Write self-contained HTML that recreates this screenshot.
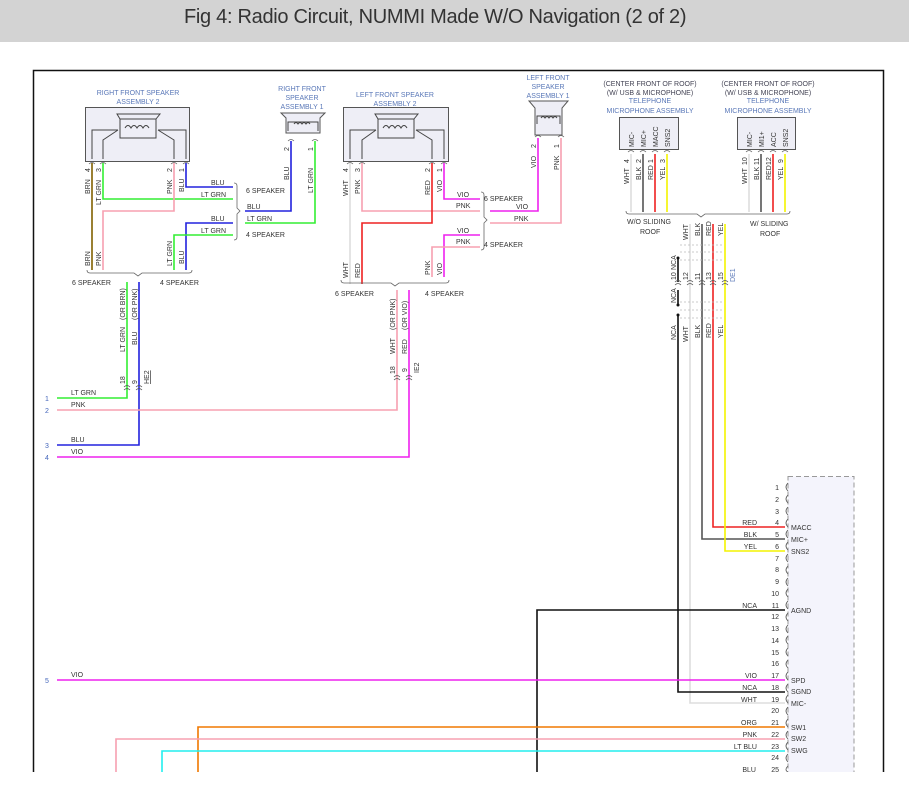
<!DOCTYPE html>
<html><head><meta charset="utf-8"><style>
html,body{margin:0;padding:0;background:#fff;width:909px;height:800px;overflow:hidden}
.hdr{position:absolute;left:0;top:0;width:909px;height:42px;background:#d3d3d3}
.hdr span{position:absolute;left:184px;top:6px;font-family:"Liberation Sans",sans-serif;font-size:20px;color:#333;letter-spacing:-0.3px}
svg{position:absolute;left:0;top:0}
text{font-family:"Liberation Sans",sans-serif;font-size:7px;fill:#333}
.t{fill:#5a78b8;font-size:7px}
.w{fill:none;stroke-width:1.6}
</style></head><body>
<div class="hdr"><span>Fig 4: Radio Circuit, NUMMI Made W/O Navigation (2 of 2)</span></div>
<svg width="909" height="800" viewBox="0 0 909 800">
<path d="M33.5 772 V70.5 H883.5 V772" fill="none" stroke="#111" stroke-width="1.5"/>

<g class="t" text-anchor="middle">
<text x="138" y="95" class="t">RIGHT FRONT SPEAKER</text><text x="138" y="104" class="t">ASSEMBLY 2</text>
<text x="302" y="91" class="t">RIGHT FRONT</text><text x="302" y="100" class="t">SPEAKER</text><text x="302" y="109" class="t">ASSEMBLY 1</text>
<text x="395" y="97" class="t">LEFT FRONT SPEAKER</text><text x="395" y="106" class="t">ASSEMBLY 2</text>
<text x="548" y="80" class="t">LEFT FRONT</text><text x="548" y="89" class="t">SPEAKER</text><text x="548" y="98" class="t">ASSEMBLY 1</text>
<text x="650" y="86" class="t" style="fill:#445">(CENTER FRONT OF ROOF)</text><text x="650" y="95" class="t" style="fill:#445">(W/ USB &amp; MICROPHONE)</text><text x="650" y="103" class="t">TELEPHONE</text><text x="650" y="113" class="t">MICROPHONE ASSEMBLY</text>
<text x="768" y="86" class="t" style="fill:#445">(CENTER FRONT OF ROOF)</text><text x="768" y="95" class="t" style="fill:#445">(W/ USB &amp; MICROPHONE)</text><text x="768" y="103" class="t">TELEPHONE</text><text x="768" y="113" class="t">MICROPHONE ASSEMBLY</text>
</g>

<g fill="#eeeef6" stroke="#555" stroke-width="1">
<rect x="85.5" y="107.5" width="104" height="54"/>
<rect x="343.5" y="107.5" width="105" height="54"/>
<path d="M281 113 H325 L320 118 V133 H286 V118 Z"/>
<path d="M529 101 H568 L562 108 V135 H535 V108 Z"/>
<rect x="619.5" y="117.5" width="59" height="32"/>
<rect x="737.5" y="117.5" width="58" height="32"/>
</g>
<g fill="none" stroke="#444" stroke-width="1">
<path d="M117 114 H160 L156 119 V138 H120 V119 Z M120 119 H156"/>
<path d="M125 128 q3 -5 6 0 q3 -5 6 0 q3 -5 6 0 q3 -5 6 0"/>
<path d="M92 159 V130 H118 M103 159 V140 L118 130 M174 159 V140 L158 130 M186 159 V130 H158"/>
<path d="M375 114 H418 L414 119 V138 H378 V119 Z M378 119 H414"/>
<path d="M383 128 q3 -5 6 0 q3 -5 6 0 q3 -5 6 0 q3 -5 6 0"/>
<path d="M350 159 V130 H376 M362 159 V140 L376 130 M432 159 V140 L416 130 M444 159 V130 H416"/>
<path d="M288 131 V122 H318 V131 M294 124 q2-3 4 0 q2-3 4 0 q2-3 4 0 q2-3 4 0"/>
<path d="M537 124 V116 H560 V124 M541 118 q2-3 4 0 q2-3 4 0 q2-3 4 0 q2-3 4 0"/>
</g>
<g fill="none" stroke="#666" stroke-width="0.8">
<path d="M89 164 q3-3 6 0 M100 164 q3-3 6 0 M171 164 q3-3 6 0 M183 164 q3-3 6 0"/>
<path d="M347 164 q3-3 6 0 M359 164 q3-3 6 0 M429 164 q3-3 6 0 M441 164 q3-3 6 0"/>
<path d="M288 141 q3-3 6 0 M312 141 q3-3 6 0 M535 137 q3-3 6 0 M558 137 q3-3 6 0"/>
<path d="M628 152 q3-3 6 0 M640 152 q3-3 6 0 M652 152 q3-3 6 0 M664 152 q3-3 6 0"/>
<path d="M746 152 q3-3 6 0 M758 152 q3-3 6 0 M770 152 q3-3 6 0 M782 152 q3-3 6 0"/>
</g>
<g font-size="7">
<text transform="translate(634,147) rotate(-90)">MIC-</text><text transform="translate(646,147) rotate(-90)">MIC+</text><text transform="translate(658,147) rotate(-90)">MACC</text><text transform="translate(670,147) rotate(-90)">SNS2</text>
<text transform="translate(752,147) rotate(-90)">MIC-</text><text transform="translate(764,147) rotate(-90)">MI1+</text><text transform="translate(776,147) rotate(-90)">ACC</text><text transform="translate(788,147) rotate(-90)">SNS2</text>
</g>

<path class="w" stroke="#806000" d="M92 163 V270"/>
<path class="w" stroke="#33ee33" d="M103 163 V199 H233"/>
<path class="w" stroke="#f7a0b0" d="M174 163 V211 H103 V270"/>
<path class="w" stroke="#2222dd" d="M186 163 V187 H233"/>
<path class="w" stroke="#2222dd" d="M233 223 H186 V270"/>
<path class="w" stroke="#33ee33" d="M233 235 H174 V270"/>
<path class="w" stroke="#2222dd" d="M245 211 H291 V141"/>
<path class="w" stroke="#33ee33" d="M245 223 H315 V141"/>
<path fill="none" stroke="#666" stroke-width="0.8" d="M234 183 q3 0 3 3 V208 l3 3 l-3 3 V237 q0 3 -3 3"/>
<path fill="none" stroke="#666" stroke-width="0.8" d="M87 270 q0 3 3 3 H134 l4 3 l4 -3 H189 q3 0 3 -3"/>
<path class="w" stroke="#dddddd" d="M350 163 V284"/>
<path class="w" stroke="#f7a0b0" d="M362 163 V211 H480"/>
<path class="w" stroke="#ee2222" d="M432 163 V223 H362 V284"/>
<path class="w" stroke="#ee22ee" d="M444 163 V199 H480"/>
<path class="w" stroke="#ee22ee" d="M480 235 H444 V277"/>
<path class="w" stroke="#f7a0b0" d="M480 247 H432 V277"/>
<path class="w" stroke="#ee22ee" d="M490 211 H538 V138"/>
<path class="w" stroke="#f7a0b0" d="M490 223 H561 V138"/>
<path fill="none" stroke="#666" stroke-width="0.8" d="M481 192 q3 0 3 3 V217 l3 3 l-3 3 V247 q0 3 -3 3"/>
<path fill="none" stroke="#666" stroke-width="0.8" d="M341 280 q0 3 3 3 H391 l4 3 l4 -3 H446 q3 0 3 -3"/>
<g font-size="7">
<text transform="translate(90,172) rotate(-90)">4</text><text transform="translate(90,194) rotate(-90)">BRN</text>
<text transform="translate(101,172) rotate(-90)">3</text><text transform="translate(101,205) rotate(-90)">LT GRN</text>
<text transform="translate(172,172) rotate(-90)">2</text><text transform="translate(172,194) rotate(-90)">PNK</text>
<text transform="translate(184,172) rotate(-90)">1</text><text transform="translate(184,192) rotate(-90)">BLU</text>
<text transform="translate(90,266) rotate(-90)">BRN</text><text transform="translate(101,266) rotate(-90)">PNK</text>
<text transform="translate(172,266) rotate(-90)">LT GRN</text><text transform="translate(184,264) rotate(-90)">BLU</text>
<text x="211" y="185">BLU</text><text x="201" y="197">LT GRN</text><text x="211" y="221">BLU</text><text x="201" y="233">LT GRN</text>
<text x="246" y="193">6 SPEAKER</text><text x="247" y="209">BLU</text><text x="247" y="221">LT GRN</text><text x="246" y="237">4 SPEAKER</text>
<text transform="translate(289,151) rotate(-90)">2</text><text transform="translate(289,180) rotate(-90)">BLU</text>
<text transform="translate(313,151) rotate(-90)">1</text><text transform="translate(313,193) rotate(-90)">LT GRN</text>
<text x="72" y="285">6 SPEAKER</text><text x="160" y="285">4 SPEAKER</text>
<text transform="translate(348,172) rotate(-90)">4</text><text transform="translate(348,196) rotate(-90)">WHT</text>
<text transform="translate(360,172) rotate(-90)">3</text><text transform="translate(360,194) rotate(-90)">PNK</text>
<text transform="translate(430,172) rotate(-90)">2</text><text transform="translate(430,195) rotate(-90)">RED</text>
<text transform="translate(442,172) rotate(-90)">1</text><text transform="translate(442,192) rotate(-90)">VIO</text>
<text transform="translate(348,278) rotate(-90)">WHT</text><text transform="translate(360,278) rotate(-90)">RED</text>
<text transform="translate(430,275) rotate(-90)">PNK</text><text transform="translate(442,275) rotate(-90)">VIO</text>
<text x="457" y="197">VIO</text><text x="456" y="208">PNK</text><text x="457" y="233">VIO</text><text x="456" y="244">PNK</text>
<text x="484" y="201">6 SPEAKER</text><text x="516" y="209">VIO</text><text x="514" y="221">PNK</text><text x="484" y="247">4 SPEAKER</text>
<text transform="translate(536,148) rotate(-90)">2</text><text transform="translate(536,168) rotate(-90)">VIO</text>
<text transform="translate(559,148) rotate(-90)">1</text><text transform="translate(559,170) rotate(-90)">PNK</text>
<text x="335" y="296">6 SPEAKER</text><text x="425" y="296">4 SPEAKER</text>
</g>

<path class="w" stroke="#33ee33" d="M127 282 V398 H57"/>
<path class="w" stroke="#2222dd" d="M139 282 V445 H57"/>
<path class="w" stroke="#f7a0b0" d="M397 290 V410 H57"/>
<path class="w" stroke="#ee22ee" d="M409 290 V457 H57"/>
<g fill="none" stroke="#555" stroke-width="0.8">
<path d="M124 390 q3-3 6 0 M124 387 q3-3 6 0 M136 390 q3-3 6 0 M136 387 q3-3 6 0"/>
<path d="M394 380 q3-3 6 0 M394 377 q3-3 6 0 M406 380 q3-3 6 0 M406 377 q3-3 6 0"/>
</g>
<g>
<text transform="translate(125,352) rotate(-90)">LT GRN</text><text transform="translate(125,320) rotate(-90)">(OR BRN)</text>
<text transform="translate(137,345) rotate(-90)">BLU</text><text transform="translate(137,320) rotate(-90)">(OR PNK)</text>
<text transform="translate(125,384) rotate(-90)">18</text><text transform="translate(137,384) rotate(-90)">9</text>
<text transform="translate(149,384) rotate(-90)" text-decoration="underline">HE2</text>
<text transform="translate(395,354) rotate(-90)">WHT</text><text transform="translate(395,330) rotate(-90)">(OR PNK)</text>
<text transform="translate(407,354) rotate(-90)">RED</text><text transform="translate(407,330) rotate(-90)">(OR VIO)</text>
<text transform="translate(395,374) rotate(-90)">18</text><text transform="translate(407,372) rotate(-90)">9</text>
<text transform="translate(419,373) rotate(-90)">IE2</text>
<text x="45" y="401" style="fill:#4466bb">1</text><text x="71" y="395">LT GRN</text>
<text x="45" y="413" style="fill:#4466bb">2</text><text x="71" y="407">PNK</text>
<text x="45" y="448" style="fill:#4466bb">3</text><text x="71" y="442">BLU</text>
<text x="45" y="460" style="fill:#4466bb">4</text><text x="71" y="454">VIO</text>
<text x="45" y="683" style="fill:#4466bb">5</text><text x="71" y="677">VIO</text>
</g>

<path class="w" stroke="#dddddd" d="M631 154 V212 M749 154 V212"/>
<path class="w" stroke="#555" d="M643 154 V212 M761 154 V212"/>
<path class="w" stroke="#ee2222" d="M655 154 V212 M773 154 V212"/>
<path class="w" stroke="#f4f400" d="M667 154 V212 M785 154 V212"/>
<path fill="none" stroke="#666" stroke-width="0.8" d="M626 211 q0 3 3 3 H697 l4 3 l4 -3 H787 q3 0 3 -3"/>
<g>
<text transform="translate(629,184) rotate(-90)">WHT</text><text transform="translate(629,163) rotate(-90)">4</text>
<text transform="translate(641,180) rotate(-90)">BLK</text><text transform="translate(641,163) rotate(-90)">2</text>
<text transform="translate(653,180) rotate(-90)">RED</text><text transform="translate(653,163) rotate(-90)">1</text>
<text transform="translate(665,180) rotate(-90)">YEL</text><text transform="translate(665,163) rotate(-90)">3</text>
<text transform="translate(747,184) rotate(-90)">WHT</text><text transform="translate(747,165) rotate(-90)">10</text>
<text transform="translate(759,180) rotate(-90)">BLK</text><text transform="translate(759,165) rotate(-90)">11</text>
<text transform="translate(771,180) rotate(-90)">RED</text><text transform="translate(771,165) rotate(-90)">12</text>
<text transform="translate(783,180) rotate(-90)">YEL</text><text transform="translate(783,163) rotate(-90)">9</text>
<text x="627" y="224">W/O SLIDING</text><text x="640" y="234">ROOF</text>
<text x="750" y="226">W/ SLIDING</text><text x="760" y="236">ROOF</text>
</g>
<path class="w" stroke="#dddddd" d="M690 224 V703 H785"/>
<path class="w" stroke="#555" d="M702 224 V539 H785"/>
<path class="w" stroke="#ee2222" d="M713 224 V527 H785"/>
<path class="w" stroke="#f4f400" d="M725 224 V551 H785"/>
<path class="w" stroke="#111" d="M678 258 V282 M678 290 V305 M678 315 V692 H785"/>
<path class="w" stroke="#111" d="M537 772 V610 H785"/>
<circle cx="678" cy="258" r="1.5" fill="#111"/><circle cx="678" cy="305" r="1.5" fill="#111"/><circle cx="678" cy="315" r="1.5" fill="#111"/>
<g fill="none" stroke="#bbb" stroke-width="0.7" stroke-dasharray="2 2">
<path d="M680 245 H724 M680 252 H724 M680 260 H724 M680 302 H724 M680 310 H724 M680 318 H724"/>
</g>
<g fill="none" stroke="#555" stroke-width="0.8">
<path d="M675 285 q3-3 6 0 M675 282 q3-3 6 0 M687 285 q3-3 6 0 M687 282 q3-3 6 0 M699 285 q3-3 6 0 M699 282 q3-3 6 0 M710 285 q3-3 6 0 M710 282 q3-3 6 0 M722 285 q3-3 6 0 M722 282 q3-3 6 0"/>
</g>
<g>
<text transform="translate(688,240) rotate(-90)">WHT</text><text transform="translate(700,236) rotate(-90)">BLK</text>
<text transform="translate(711,236) rotate(-90)">RED</text><text transform="translate(723,236) rotate(-90)">YEL</text>
<text transform="translate(676,270) rotate(-90)">NCA</text><text transform="translate(676,303) rotate(-90)">NCA</text>
<text transform="translate(676,280) rotate(-90)">10</text><text transform="translate(688,280) rotate(-90)">12</text>
<text transform="translate(700,280) rotate(-90)">11</text><text transform="translate(711,280) rotate(-90)">13</text>
<text transform="translate(723,280) rotate(-90)">15</text><text transform="translate(735,282) rotate(-90)" style="fill:#5a78b8">DE1</text>
<text transform="translate(676,340) rotate(-90)">NCA</text><text transform="translate(688,342) rotate(-90)">WHT</text>
<text transform="translate(700,338) rotate(-90)">BLK</text><text transform="translate(711,338) rotate(-90)">RED</text>
<text transform="translate(723,338) rotate(-90)">YEL</text>
</g>

<path class="w" stroke="#ee22ee" d="M57 680 H785"/>
<path class="w" stroke="#f07800" d="M198 772 V727 H785"/>
<path class="w" stroke="#f7a0b0" d="M116 772 V739 H785"/>
<path class="w" stroke="#22eeee" d="M162 772 V751 H785"/>

<rect x="788" y="476.5" width="66" height="300" fill="#f4f4fc" stroke="#999" stroke-dasharray="5 3"/>
<g fill="none" stroke="#555" stroke-width="0.8">
<path d="M788 483 q-4 4 0 8 M788 495 q-4 4 0 8 M788 507 q-4 4 0 8 M788 519 q-4 4 0 8 M788 530 q-4 4 0 8 M788 542 q-4 4 0 8 M788 554 q-4 4 0 8 M788 566 q-4 4 0 8 M788 578 q-4 4 0 8 M788 589 q-4 4 0 8 M788 601 q-4 4 0 8 M788 613 q-4 4 0 8 M788 625 q-4 4 0 8 M788 636 q-4 4 0 8 M788 648 q-4 4 0 8 M788 660 q-4 4 0 8 M788 672 q-4 4 0 8 M788 684 q-4 4 0 8 M788 695 q-4 4 0 8 M788 707 q-4 4 0 8 M788 719 q-4 4 0 8 M788 731 q-4 4 0 8 M788 742 q-4 4 0 8 M788 754 q-4 4 0 8 M788 766 q-4 4 0 6"/>
</g>
<rect x="780" y="772" width="105" height="28" fill="#fff"/>
<g text-anchor="end">
<text x="779" y="490">1</text><text x="779" y="502">2</text><text x="779" y="514">3</text><text x="779" y="525">4</text><text x="779" y="537">5</text><text x="779" y="549">6</text><text x="779" y="561">7</text><text x="779" y="572">8</text><text x="779" y="584">9</text><text x="779" y="596">10</text><text x="779" y="608">11</text><text x="779" y="619">12</text><text x="779" y="631">13</text><text x="779" y="643">14</text><text x="779" y="655">15</text><text x="779" y="666">16</text><text x="779" y="678">17</text><text x="779" y="690">18</text><text x="779" y="702">19</text><text x="779" y="713">20</text><text x="779" y="725">21</text><text x="779" y="737">22</text><text x="779" y="749">23</text><text x="779" y="760">24</text><text x="779" y="772">25</text>
<text x="757" y="525">RED</text><text x="757" y="537">BLK</text><text x="757" y="549">YEL</text><text x="757" y="608">NCA</text><text x="757" y="678">VIO</text><text x="757" y="690">NCA</text><text x="757" y="702">WHT</text><text x="757" y="725">ORG</text><text x="757" y="737">PNK</text><text x="757" y="749">LT BLU</text><text x="756" y="772">BLU</text>
</g>
<g>
<text x="791" y="530">MACC</text><text x="791" y="542">MIC+</text><text x="791" y="554">SNS2</text><text x="791" y="613">AGND</text><text x="791" y="683">SPD</text><text x="791" y="694">SGND</text><text x="791" y="706">MIC-</text><text x="791" y="730">SW1</text><text x="791" y="741">SW2</text><text x="791" y="753">SWG</text>
</g>
</svg>
</body></html>
